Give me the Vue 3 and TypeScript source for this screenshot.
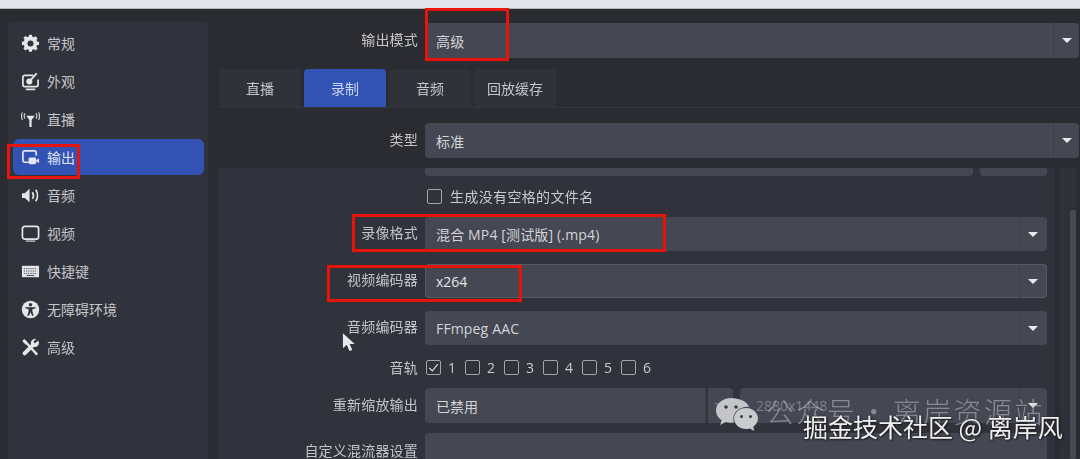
<template>
  <div class="screen">
    <div class="topbar"></div>
    <div class="window">
      <aside class="sidebar">
        <div
          v-for="item in navItems"
          :key="item.label"
          class="nav-item"
          :class="{ active: item.label === '输出' }"
        >
          <svg class="nav-icon" viewBox="0 0 20 20" fill="none" v-html="item.icon"></svg>
          <span>{{ item.label }}</span>
        </div>
      </aside>

      <main class="main">
        <div class="row mode-row">
          <label>输出模式</label>
          <div class="select wide"><span>高级</span><i class="drop"></i></div>
        </div>

        <div class="tabs">
          <div v-for="t in tabs" :key="t" class="tab" :class="{ on: t === '录制' }">{{ t }}</div>
        </div>

        <div class="tab-body">
          <div class="row type-row">
            <label>类型</label>
            <div class="select wide"><span>标准</span><i class="drop"></i></div>
          </div>

          <div class="pane">
            <div class="pane-inner">
              <div class="clipped">
                <div class="clip-a"></div>
                <div class="clip-b"></div>
              </div>

              <div class="row check-row">
                <label></label>
                <div class="check-line"><b class="box"></b><span>生成没有空格的文件名</span></div>
              </div>

              <div class="row form-row first">
                <label>录像格式</label>
                <div class="select"><span>混合 MP4 [测试版] (.mp4)</span><i class="drop"></i></div>
              </div>
              <div class="row form-row">
                <label>视频编码器</label>
                <div class="select focused"><span class="bright">x264</span><i class="drop"></i></div>
              </div>
              <div class="row form-row">
                <label>音频编码器</label>
                <div class="select"><span>FFmpeg AAC</span><i class="drop"></i></div>
              </div>

              <div class="row track-row">
                <label>音轨</label>
                <div class="tracks">
                  <div v-for="n in 6" :key="n" class="track">
                    <b class="box">
                      <svg v-if="n === 1" viewBox="0 0 14 14" fill="none">
                        <path d="M2.500 7.500 5.800 10.600 11.600 3.400" stroke="#d8d9dd" stroke-width="1.300" />
                      </svg>
                    </b>
                    <span>{{ n }}</span>
                  </div>
                </div>
              </div>

              <div class="row rescale-row">
                <label>重新缩放输出</label>
                <div class="rescale">
                  <div class="res-a"><span>已禁用</span></div>
                  <div class="res-b"><i class="drop dim"></i></div>
                  <div class="res-c"><span>2880x1448</span><i class="drop"></i></div>
                </div>
              </div>

              <div class="row custom-row">
                <label>自定义混流器设置</label>
                <div class="custom-input"></div>
              </div>
            </div>
            <div class="scrollbar"><div class="thumb"></div></div>
          </div>
        </div>
      </main>
    </div>

    <!-- annotations drawn over the shot -->
    <div class="mark m1"></div>
    <div class="mark m2"></div>
    <div class="mark m3"></div>
    <div class="mark m4"></div>

    <svg class="cursor" viewBox="0 0 16 22">
      <path d="M1 1 1 17 5 13.500 8 20 11 19 8.200 12.600 13.500 12.600Z" fill="#e8e8ea" />
    </svg>

    <!-- watermark -->
    <svg class="wechat" viewBox="0 0 44 36">
      <path d="M16 1C7.500 1 1 6.600 1 13.500c0 4 2.200 7.400 5.600 9.700L5.200 28l5.400-3c1.700.5 3.500.8 5.400.8 1 0 2-.1 3-.3-.4-1.200-.6-2.400-.6-3.700 0-6.800 6.400-12 14.200-12 .5 0 1 0 1.500.1C32.200 4.800 24.800 1 16 1Z" fill="#c4c5c8" />
      <path d="M43 21.500C43 15.700 37.600 11 31 11s-12 4.700-12 10.500S24.400 32 31 32c1.400 0 2.800-.2 4-.6l4.400 2.600-1.200-4.300c2.900-2 4.800-5 4.800-8.200Z" fill="#c9cacd" />
      <circle cx="11" cy="10" r="1.800" fill="#3a3c44" />
      <circle cx="21" cy="10" r="1.800" fill="#3a3c44" />
      <circle cx="26.500" cy="19.500" r="1.500" fill="#3a3c44" />
      <circle cx="35.500" cy="19.500" r="1.500" fill="#3a3c44" />
    </svg>
    <div class="wm-back">公众号 · 离岸资源站</div>
    <div class="wm-front">掘金技术社区 @ 离岸风</div>
  </div>
</template>

<script setup lang="ts">
interface NavItem {
  label: string
  icon: string
}

const navItems: NavItem[] = [
  {
    label: '常规',
    icon: '<path d="M8.400 1.500h3.200l.5 2.300 1.700.7 2-1.300 2.300 2.300-1.300 2 .7 1.700 2.300.5v3.200l-2.300.5-.7 1.700 1.300 2-2.300 2.300-2-1.300-1.700.7-.5 2.300H8.400l-.5-2.300-1.700-.7-2 1.300-2.300-2.300 1.300-2-.7-1.700-2.300-.5V9.500l2.300-.5.7-1.700-1.300-2 2.300-2.300 2 1.300 1.700-.7Z" transform="translate(.8 -.6) scale(.92)" fill="#e6e6e8"/><circle cx="10" cy="10" r="3.200" fill="#31333c"/>',
  },
  {
    label: '外观',
    icon: '<path d="M13 3.500H4a2 2 0 0 0-2 2v8a2 2 0 0 0 2 2h12a2 2 0 0 0 2-2V8" stroke="#e6e6e8" stroke-width="1.800"/><path d="M5 18.300h10" stroke="#e6e6e8" stroke-width="1.800"/><circle cx="8.800" cy="10" r="3.200" fill="#e6e6e8"/><path d="M10.500 8 16.500 1.500" stroke="#e6e6e8" stroke-width="2"/>',
  },
  {
    label: '直播',
    icon: '<path d="M5.500 6h9L11.200 10.500V18H8.800V10.500Z" fill="#e6e6e8"/><path d="M4.300 3.500C3.200 5 3.200 7.500 4.300 9M1.500 2.500C.3 5 .3 8 1.500 10.500M15.700 3.500c1.100 1.500 1.100 4 0 5.500M18.500 2.500c1.200 2.500 1.200 5.500 0 8" stroke="#d8d8da" stroke-width="1.200"/>',
  },
  {
    label: '输出',
    icon: '<path d="M8 15H4a2 2 0 0 1-2-2V5a2 2 0 0 1 2-2h10a2 2 0 0 1 2 2v3" stroke="#e4e8f6" stroke-width="1.800"/><rect x="8" y="10" width="8" height="7" rx="1.500" fill="#e4e8f6"/><path d="M16 13l3-2v5l-3-2Z" fill="#e4e8f6"/>',
  },
  {
    label: '音频',
    icon: '<path d="M1 7.500h3L9 3v14l-5-4.500H1Z" fill="#e6e6e8"/><path d="M12 6.500c1.300 2 1.300 5 0 7M15.500 4c2.400 3.500 2.400 8.500 0 12" stroke="#e6e6e8" stroke-width="1.800"/>',
  },
  {
    label: '视频',
    icon: '<rect x="1.500" y="2.500" width="17" height="13.500" rx="2.500" stroke="#e6e6e8" stroke-width="1.800"/><path d="M5 18h10" stroke="#c8c8ca" stroke-width="1.400"/>',
  },
  {
    label: '快捷键',
    icon: '<rect x="1" y="4" width="18" height="12" fill="#e6e6e8"/><path d="M3 7h14M3 9.500h14M3 12h14" stroke="#44464e" stroke-width="1" stroke-dasharray="1.300 1"/><path d="M6 14.200h8" stroke="#44464e" stroke-width="1"/>',
  },
  {
    label: '无障碍环境',
    icon: '<circle cx="10" cy="10" r="9.200" fill="#e6e6e8"/><circle cx="10" cy="5" r="1.800" fill="#31333c"/><path d="M4.500 7.500h11v1.300l-3.500 1v2.200l1.400 4.500h-1.600L10 12.800 8.200 16.500H6.600L8 12V9.800l-3.500-1Z" fill="#31333c"/>',
  },
  {
    label: '高级',
    icon: '<path d="M2.500 2 6 5.500M6 5.500l11 12" stroke="#e6e6e8" stroke-width="2.600"/><path d="M1.500 3.500 3.500 1.500 7 5 5 7Z" fill="#e6e6e8"/><path d="M18 2.500l-2.800 2.800-1.500-.4-.4-1.500L16 1a4.500 4.500 0 0 0-5.500 5.500L2 15a2.200 2.200 0 0 0 3 3l8.500-8.500A4.500 4.500 0 0 0 18 2.500Z" fill="#e6e6e8"/>',
  },
]

const tabs = ['直播', '录制', '音频', '回放缓存']
</script>

<style scoped>
.screen {
  position: relative;
  width: 1080px;
  height: 459px;
  overflow: hidden;
  background: #2b2c32;
  color: #c9cacd;
  font-family: "Open Sans", "Noto Sans CJK SC", sans-serif;
  font-size: 14px;
}
.topbar {
  height: 9px;
  background: #e4e5ea;
  border-bottom: 1px solid #b4b5b8;
  box-sizing: border-box;
}
.window {
  display: flex;
  height: 450px;
  filter: blur(0.5px);
}

.sidebar {
  width: 200px;
  margin: 13px 0 0 8px;
  padding: 3px 4px 0 5px;
  box-sizing: border-box;
  background: #31333c;
  border-radius: 4px 4px 0 0;
  flex: none;
}
.nav-item {
  height: 36px;
  margin-bottom: 2px;
  display: flex;
  align-items: center;
  gap: 7px;
  padding-left: 8px;
  border-radius: 6px;
  color: #c4c5c9;
}
.nav-item.active {
  background: #3252b4;
  color: #dfe4f4;
}
.nav-icon {
  width: 19px;
  height: 19px;
  flex: none;
}

.main {
  flex: 1;
  min-width: 0;
  padding: 14px 0 0 11px;
}
.row {
  display: flex;
  align-items: center;
}
.row label {
  flex: none;
  width: 206px;
  padding-right: 7px;
  box-sizing: border-box;
  text-align: right;
  color: #c3c4c8;
  letter-spacing: 0.2px;
  margin-top: -4px;
}
.select {
  position: relative;
  flex: none;
  width: 622px;
  height: 34px;
  box-sizing: border-box;
  background: #454852;
  border-radius: 4px;
  display: flex;
  align-items: center;
  padding-left: 11px;
  color: #d3d4d8;
}
.select span {
  letter-spacing: 0.15px;
}
.select .bright {
  color: #e4e5e8;
  letter-spacing: 0;
}
.select.focused {
  box-shadow: inset 0 0 0 1px #565a64;
}
.select.wide {
  flex: 1;
  width: auto;
  height: 35px;
  margin-right: 1px;
}
.drop {
  position: absolute;
  right: 0;
  top: 0;
  bottom: 0;
  width: 27px;
  border-left: 1px solid #3c3f48;
}
.select.wide .drop {
  width: 25px;
}
.drop::after {
  content: "";
  position: absolute;
  left: 8px;
  top: 14.5px;
  border-left: 5px solid transparent;
  border-right: 5px solid transparent;
  border-top: 5px solid #e9e9ec;
}
.drop.dim::after {
  border-top-color: #6e7079;
}

.mode-row {
  height: 35px;
}

.tabs {
  display: flex;
  gap: 3px;
  margin-top: 11px;
  height: 38px;
  border-bottom: 1px solid #34363e;
}
.tab {
  width: 82px;
  display: flex;
  align-items: center;
  justify-content: center;
  background: #30323a;
  border-radius: 4px 4px 0 0;
  color: #c4c5c9;
}
.tab.on {
  background: #3252b4;
  color: #cdd6f2;
}

.tab-body {
  padding-top: 15px;
}

.pane {
  display: flex;
  margin-top: 10px;
  height: 291px;
  gap: 5px;
}
.pane-inner {
  width: 836px;
  flex: none;
  background: #31333c;
  overflow: hidden;
}
.scrollbar {
  width: 16px;
  flex: none;
  margin-right: 4px;
  background: #2f3138;
  padding-top: 42px;
  display: flex;
  justify-content: flex-end;
}
.thumb {
  width: 6px;
  height: 100%;
  background: #474a53;
  border-radius: 2px;
}

.clipped {
  display: flex;
  gap: 7px;
  height: 8px;
  padding-left: 206px;
}
.clip-a {
  width: 548px;
  background: #454852;
  border-radius: 0 0 4px 4px;
}
.clip-b {
  width: 67px;
  background: #454852;
  border-radius: 0 0 4px 4px;
}

.check-row {
  height: 24px;
  margin-top: 8px;
}
.check-line {
  display: flex;
  align-items: center;
  gap: 8px;
  padding-left: 2px;
  letter-spacing: 0.35px;
  color: #c9cacd;
}
.box {
  display: block;
  width: 15px;
  height: 15px;
  box-sizing: border-box;
  border: 1px solid #a3a5aa;
  border-radius: 2px;
  flex: none;
}
.box svg {
  display: block;
  width: 13px;
  height: 13px;
}

.form-row {
  margin-top: 13px;
}
.form-row.first {
  margin-top: 9px;
}

.track-row {
  height: 24px;
  margin-top: 10px;
}
.track-row label {
  margin-top: 0;
}
.tracks {
  display: flex;
  gap: 12px;
  padding-left: 1px;
}
.track {
  display: flex;
  align-items: center;
  gap: 7px;
  width: 27px;
  color: #c9cacd;
}

.rescale-row {
  margin-top: 9px;
}
.rescale {
  display: flex;
  gap: 3px;
  height: 35px;
  width: 622px;
}
.res-a,
.res-b,
.res-c {
  position: relative;
  background: #454852;
  display: flex;
  align-items: center;
}
.res-a {
  width: 280px;
  padding-left: 11px;
  box-sizing: border-box;
  border-radius: 4px 0 0 4px;
  color: #d3d4d8;
}
.res-b {
  width: 25px;
  border-radius: 0 4px 4px 0;
}
.res-c {
  flex: 1;
  margin-left: 4px;
  padding-left: 16px;
  color: #7d7f88;
  border-radius: 4px;
  font-size: 14px;
}

.custom-row {
  margin-top: 10px;
  align-items: flex-start;
}
.custom-row label {
  margin-top: 10px;
  line-height: 15px;
}
.custom-input {
  width: 622px;
  height: 35px;
  background: #454852;
  border-radius: 4px;
}

.mark {
  position: absolute;
  box-sizing: border-box;
  border: 3px solid #e8140c;
}
.m1 {
  left: 425px;
  top: 8px;
  width: 84px;
  height: 53px;
}
.m2 {
  left: 7px;
  top: 144px;
  width: 73px;
  height: 35px;
}
.m3 {
  left: 352px;
  top: 214px;
  width: 314px;
  height: 38px;
}
.m4 {
  left: 327px;
  top: 265px;
  width: 195px;
  height: 37px;
}

.cursor {
  position: absolute;
  left: 342px;
  top: 332px;
  width: 15px;
  height: 21px;
}

.wechat {
  position: absolute;
  left: 715px;
  top: 397px;
  width: 44px;
  height: 36px;
}
.wm-back {
  position: absolute;
  left: 766px;
  top: 393px;
  font-size: 28px;
  line-height: 36px;
  white-space: nowrap;
  color: rgba(190, 192, 198, 0.55);
  letter-spacing: 2.4px;
  word-spacing: -6px;
  font-family: "Noto Sans CJK SC", sans-serif;
  font-weight: 300;
}
.wm-front {
  position: absolute;
  left: 803px;
  top: 409px;
  font-size: 25px;
  line-height: 34px;
  white-space: nowrap;
  color: #f0f0f0;
  font-family: "Noto Sans CJK SC", sans-serif;
  text-shadow: 0 0 2px #1c1c20, 1px 1px 2px #1c1c20;
}
</style>

<style>
html,
body {
  margin: 0;
  background: #2b2c32;
}
</style>
